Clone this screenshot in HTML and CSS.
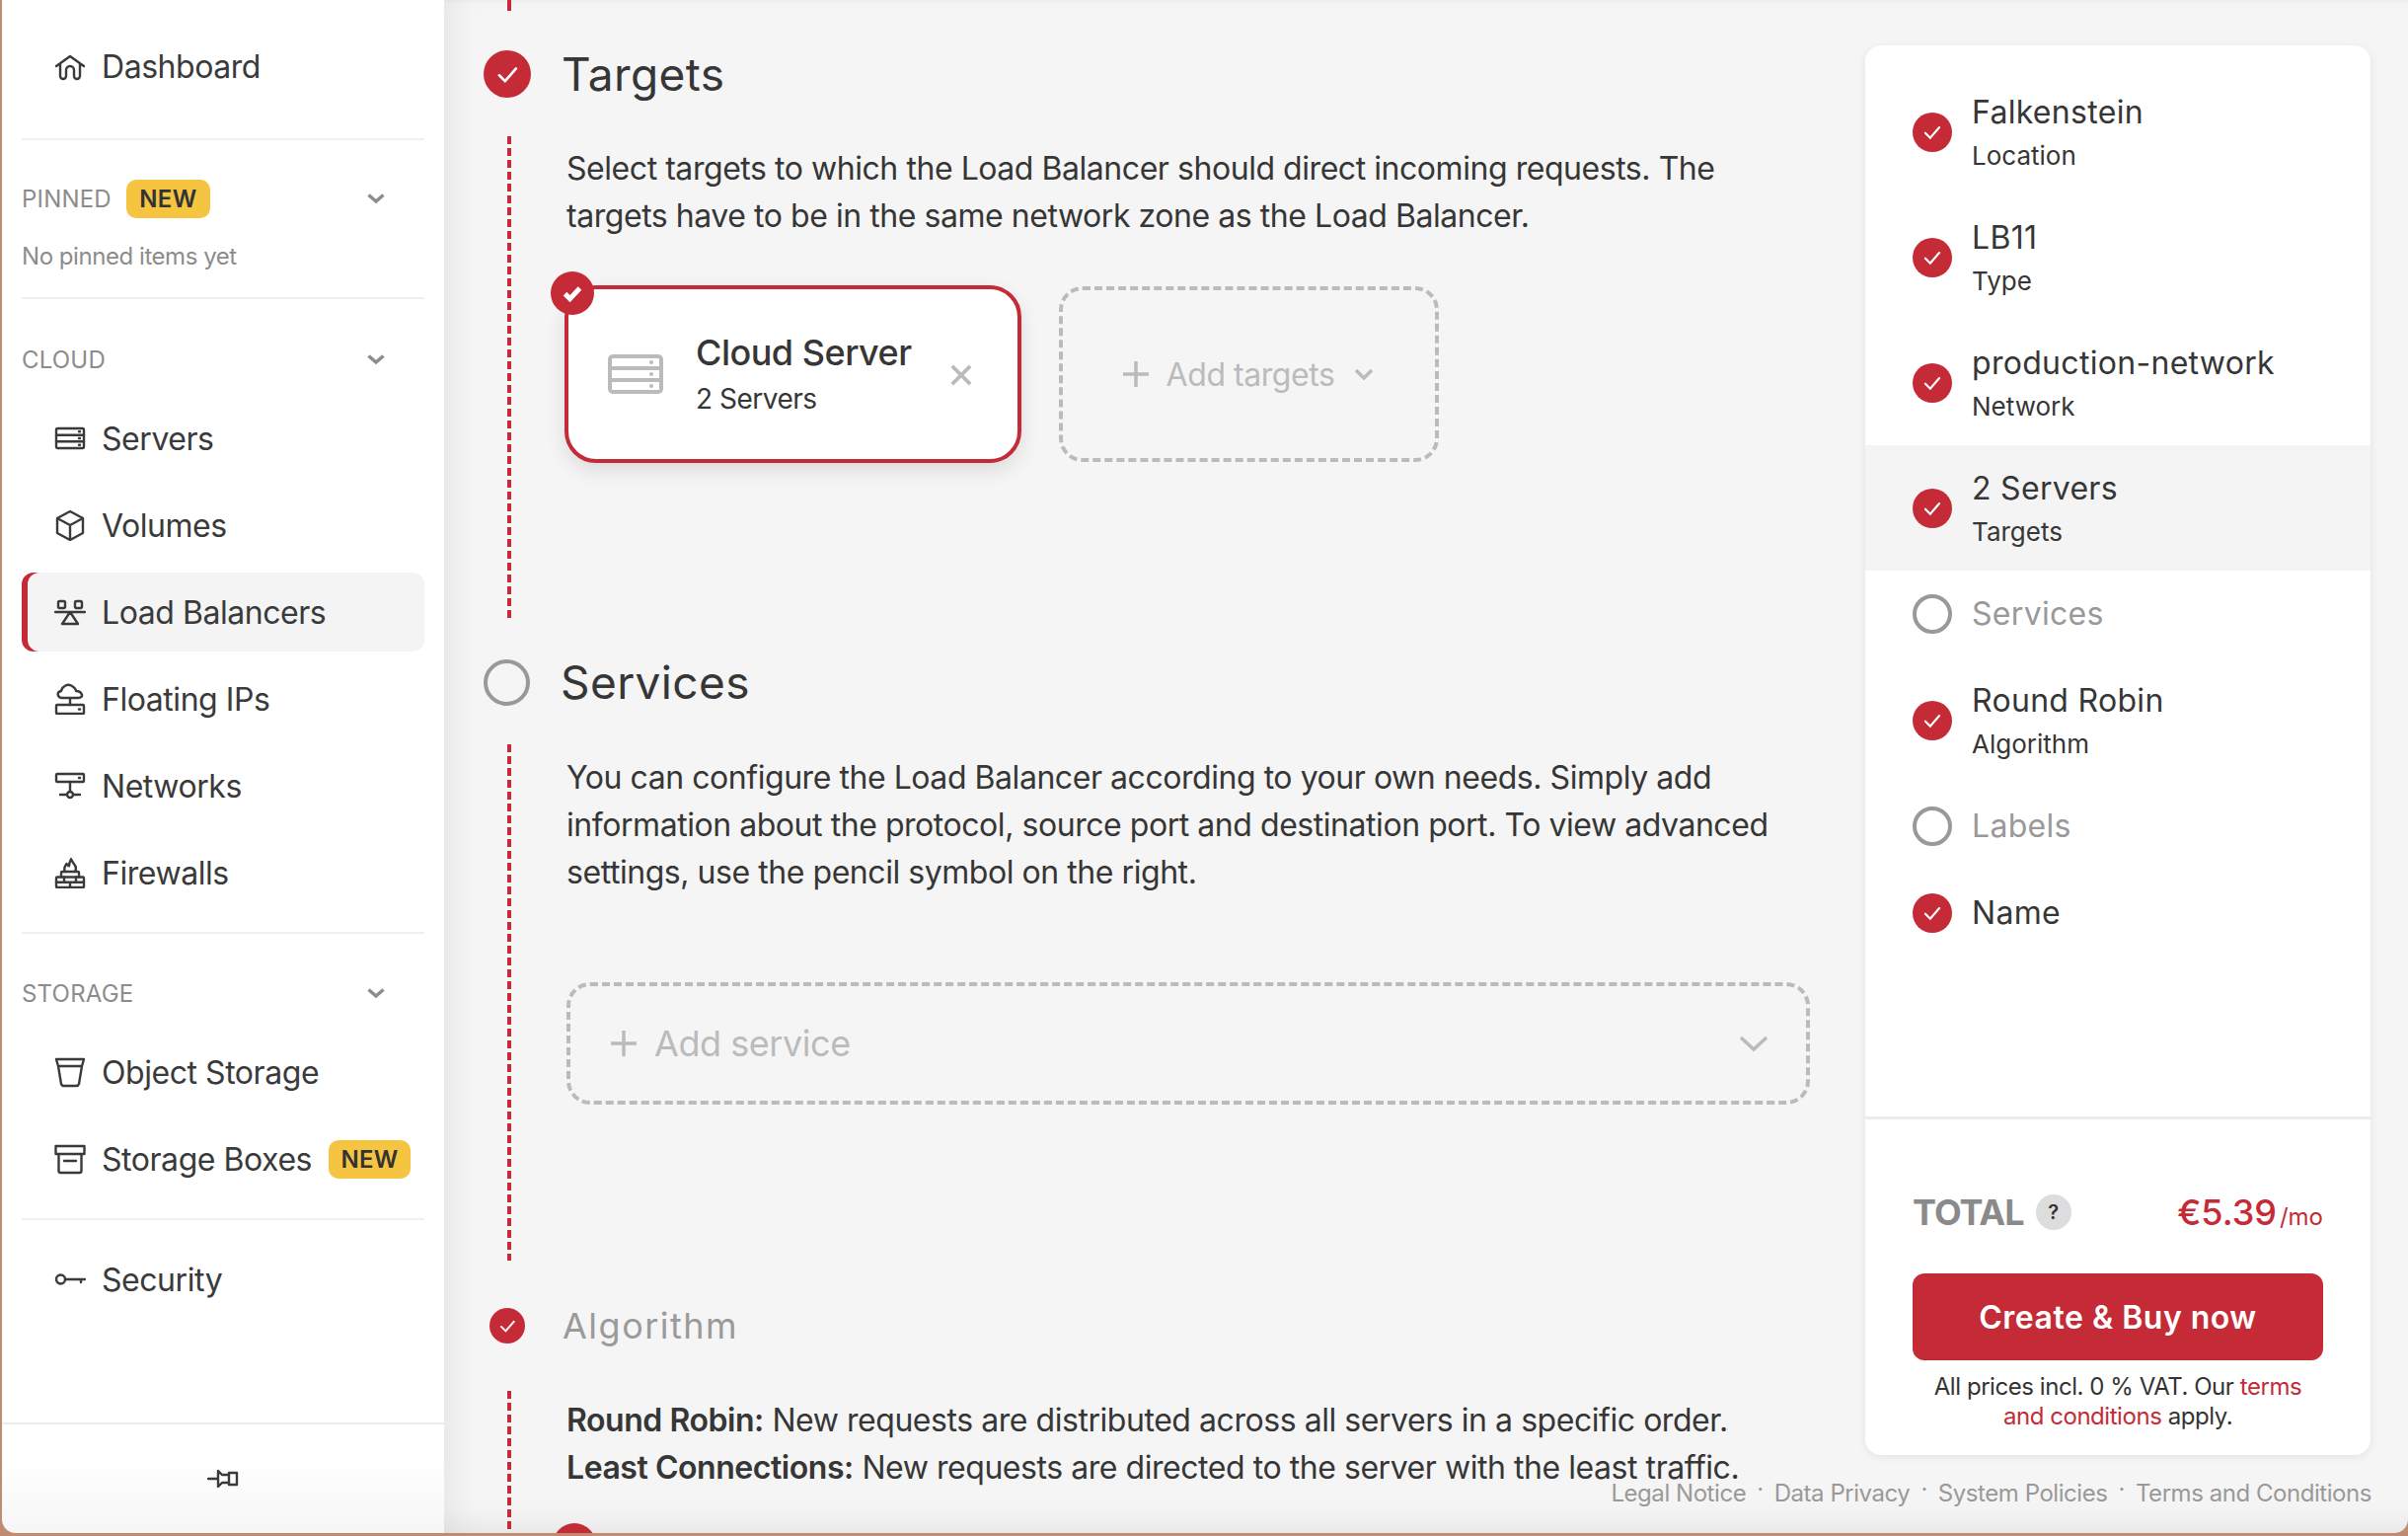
FILE: index.html
```html
<!DOCTYPE html>
<html lang="en">
<head>
<meta charset="utf-8">
<title>Create Load Balancer</title>
<link rel="stylesheet" href="styles.css">
</head>
<body>
<div class="window">
  <nav class="sidebar">
    <a class="row first"><svg class="ico" viewBox="0 0 32 32"><path d="M2 16 16 6l14 10M6 13v13a3 3 0 0 0 6 0v-6a4 4 0 0 1 8 0v6a3 3 0 0 0 6 0V13"/></svg>Dashboard</a>
    <hr class="rule">
    <div class="head"><span>PINNED</span><span class="badge">NEW</span><svg class="chev" viewBox="0 0 18 12"><path d="M1.5 2.5 9 9l7.5-6.5"/></svg></div>
    <p class="note">No pinned items yet</p>
    <hr class="rule tight">
    <div class="head cloud"><span>CLOUD</span><svg class="chev" viewBox="0 0 18 12"><path d="M1.5 2.5 9 9l7.5-6.5"/></svg></div>
    <div class="rows">
      <a class="row"><svg class="ico" viewBox="0 0 32 32"><rect x="2" y="6" width="28" height="20" rx="1.5"/><path d="M2 12.7h28M2 19.3h28M25 9.3h1M25 16h1M25 22.700h1"/></svg>Servers</a>
      <a class="row"><svg class="ico" viewBox="0 0 32 32"><path d="M16 2 29 9v15l-13 7-13-7V9zM3 9l13 7 13-7M16 16v15"/></svg>Volumes</a>
      <a class="row active"><svg class="ico" viewBox="0 0 32 32"><rect x="4" y="5" width="7" height="7" rx="1.5"/><rect x="21" y="5" width="7" height="7" rx="1.5"/><path d="M1 16h30M16 16 8 28h16z"/></svg>Load Balancers</a>
      <a class="row"><svg class="ico" viewBox="0 0 32 32"><path d="M8 15C3 15 2 9 7 8c1-5 7-8 11-5 3 2 4 4 4 5 6 0 9 7 2 7zM16 15v7"/><rect x="2" y="22" width="28" height="9" rx="1"/><path d="M25 26.500h1"/></svg>Floating IPs</a>
      <a class="row"><svg class="ico" viewBox="0 0 32 32"><rect x="2" y="4" width="28" height="8" rx="1"/><path d="M25 8h1M16 12v10M6 25h7M19 25h7"/><circle cx="16" cy="25" r="3"/></svg>Networks</a>
      <a class="row"><svg class="ico" viewBox="0 0 32 32"><path d="M11 15C9 12 11 9 12.500 7c.8 1.500 1.500 2 2.500 2.200 0-2.500 1-5 2-7 1 3 3 4.500 4 6.500 1.500 2.500 1 4.500 0 6.300"/><rect x="2" y="20.500" width="28" height="10.500" rx="1"/><path d="M7 20.500V16a1 1 0 0 1 1-1h16a1 1 0 0 1 1 1v4.500M2 25.700h28M10 20.500v5.200M22 20.500v5.200M16 25.700V31"/></svg>Firewalls</a>
    </div>
    <hr class="rule">
    <div class="head storage"><span>STORAGE</span><svg class="chev" viewBox="0 0 18 12"><path d="M1.5 2.5 9 9l7.500-6.500"/></svg></div>
    <div class="rows">
      <a class="row"><svg class="ico" viewBox="0 0 32 32"><path d="M2 3h28l-2 7H4zM4 10l3 18a3 3 0 0 0 3 2h12a3 3 0 0 0 3-2l3-18"/></svg>Object Storage</a>
      <a class="row"><svg class="ico" viewBox="0 0 32 32"><path d="M1.500 3h29v8h-29zM4.500 11v17a2 2 0 0 0 2 2h19a2 2 0 0 0 2-2V11M10 18h12"/></svg>Storage Boxes<span class="badge small">NEW</span></a>
    </div>
    <hr class="rule">
    <a class="row"><svg class="ico" viewBox="0 0 32 32"><circle cx="6.500" cy="16" r="4.500"/><path d="M11 16h20M27 16v3"/></svg>Security</a>
    <div class="side-foot"><svg class="ico" viewBox="0 0 32 32"><path d="M1 16h10M11 8l4 4h7v8h-7l-4 4zM22 10h8v12h-8z"/></svg></div>
  </nav>

  <main class="main">
    <div class="steps">
      <div class="lead"></div>
      <section>
        <header class="step-head">
          <span class="dot big"><svg viewBox="0 0 24 24"><path d="M7 12.500l3.500 3.500L17 8.500"/></svg></span>
          <h2>Targets</h2>
        </header>
        <div class="step-body targets">
          <p>Select targets to which the Load Balancer should direct incoming requests. The targets have to be in the same network zone as the Load Balancer.</p>
          <div class="cards">
            <div class="card">
              <span class="card-check"><svg viewBox="0 0 24 24"><path d="M6 12.500l4 4 8-8.500"/></svg></span>
              <svg class="card-ico" viewBox="0 0 56 40"><rect x="2" y="2" width="52" height="36" rx="3"/><path d="M2 14h52M2 26h52"/><circle class="fill" cx="44" cy="8" r="2"/><circle class="fill" cx="44" cy="20" r="2"/><circle class="fill" cx="44" cy="32" r="2"/></svg>
              <div class="card-text"><strong>Cloud Server</strong><span>2 Servers</span></div>
              <svg class="card-x" viewBox="0 0 24 24"><path d="M2 2l20 20M22 2 2 22"/></svg>
            </div>
            <div class="add-targets">
              <svg class="plus" viewBox="0 0 28 28"><path d="M14 1v26M1 14h26"/></svg>
              <span>Add targets</span>
              <svg class="add-chev" viewBox="0 0 20 12"><path d="M2 2l8 8 8-8"/></svg>
            </div>
          </div>
        </div>
      </section>
      <section>
        <header class="step-head">
          <span class="dot empty"></span>
          <h2>Services</h2>
        </header>
        <div class="step-body services">
          <p>You can configure the Load Balancer according to your own needs. Simply add information about the protocol, source port and destination port. To view advanced settings, use the pencil symbol on the right.</p>
          <div class="add-service">
            <svg class="plus" viewBox="0 0 28 28"><path d="M14 1v26M1 14h26"/></svg>
            <span>Add service</span>
            <svg class="service-chev" viewBox="0 0 30 18"><path d="M2 3l13 12L28 3"/></svg>
          </div>
        </div>
      </section>
      <section>
        <header class="step-head muted">
          <span class="dot mid"><svg viewBox="0 0 24 24"><path d="M7 12.500l3.500 3.500L17 8.500"/></svg></span>
          <h2>Algorithm</h2>
        </header>
        <div class="step-body algo">
          <p><b>Round Robin:</b> New requests are distributed across all servers in a specific order.<br><b>Least Connections:</b> New requests are directed to the server with the least traffic.</p>
          <span class="next-dot"></span>
        </div>
      </section>
    </div>

    <aside class="panel">
      <ul class="list">
        <li class="item"><span class="dot"><svg viewBox="0 0 24 24"><path d="M7 12.500l3.500 3.500L17 8.500"/></svg></span><div><div class="t">Falkenstein</div><div class="s">Location</div></div></li>
        <li class="item"><span class="dot"><svg viewBox="0 0 24 24"><path d="M7 12.500l3.500 3.500L17 8.500"/></svg></span><div><div class="t">LB11</div><div class="s">Type</div></div></li>
        <li class="item"><span class="dot"><svg viewBox="0 0 24 24"><path d="M7 12.500l3.500 3.500L17 8.500"/></svg></span><div><div class="t">production-network</div><div class="s">Network</div></div></li>
        <li class="item current"><span class="dot"><svg viewBox="0 0 24 24"><path d="M7 12.500l3.500 3.500L17 8.500"/></svg></span><div><div class="t">2 Servers</div><div class="s">Targets</div></div></li>
        <li class="item single off"><span class="dot empty"></span><div class="t">Services</div></li>
        <li class="item"><span class="dot"><svg viewBox="0 0 24 24"><path d="M7 12.500l3.500 3.500L17 8.500"/></svg></span><div><div class="t">Round Robin</div><div class="s">Algorithm</div></div></li>
        <li class="item single off"><span class="dot empty"></span><div class="t">Labels</div></li>
        <li class="item single"><span class="dot"><svg viewBox="0 0 24 24"><path d="M7 12.500l3.500 3.500L17 8.500"/></svg></span><div class="t">Name</div></li>
      </ul>
      <div class="summary">
        <div class="total"><span class="total-label">TOTAL</span><span class="help">?</span><span class="price">€5.39<small>/mo</small></span></div>
        <button class="buy">Create &amp; Buy now</button>
        <p class="fine">All prices incl. 0 % VAT. Our <a>terms and conditions</a> apply.</p>
      </div>
    </aside>

    <footer class="links"><a>Legal Notice</a><i>·</i><a>Data Privacy</a><i>·</i><a>System Policies</a><i>·</i><a>Terms and Conditions</a></footer>
  </main>
</div>
</body>
</html>
```
FILE: styles.css
```css
* { box-sizing: border-box; }
html, body { margin: 0; height: 1556px; overflow: hidden; }
body { background: #c08a73; font-family: Inter, "Liberation Sans", sans-serif; color: #363636; letter-spacing: -.45px; }
.window { display: flex; height: 1553px; margin-left: 2px; overflow: hidden; border-radius: 0 0 14px 14px; }

.sidebar { position: relative; z-index: 1; display: flex; flex-direction: column; width: 448px; flex: none; padding: 27px 20px 0; background: linear-gradient(#fff 1480px, #f6f6f6); }
.row { display: flex; align-items: center; gap: 16px; height: 80px; padding-left: 33px; font-size: 32px; color: #3a3a3a; border-radius: 12px; white-space: nowrap; }
.row.active { background: #f4f4f4; box-shadow: inset 6px 0 0 #c42b37; }
.rows { display: flex; flex-direction: column; gap: 8px; margin-top: 20px; }
.ico { width: 32px; height: 32px; flex: none; fill: none; stroke: #3a3a3a; stroke-width: 2.4; stroke-linecap: round; stroke-linejoin: round; }
.rule { width: 100%; height: 2px; margin: 33px 0 0; border: 0; background: #f0f0f0; flex: none; }
.rule.tight { margin-top: 23px; }
.rows + .rule { margin-top: 20px; }
.rule + .row { margin-top: 20px; }
.head { display: flex; align-items: center; gap: 15px; height: 40px; margin-top: 39px; font-size: 24px; color: #8c8c8c; letter-spacing: .2px; }
.head.cloud { margin-top: 41px; }
.head.storage { margin-top: 40px; }
.chev { width: 18px; height: 12px; margin-left: auto; margin-right: 40px; fill: none; stroke: #8c8c8c; stroke-width: 3.4; }
.badge { display: inline-flex; align-items: center; justify-content: center; width: 85px; height: 39px; border-radius: 10px; background: #f5c542; color: #333; font-size: 24px; font-weight: 600; letter-spacing: .3px; }
.badge.small { width: 83px; height: 39px; margin-left: 1px; }
.note { margin: 21px 0 0; font-size: 24px; line-height: 36px; color: #8c8c8c; }
.side-foot { display: flex; align-items: center; justify-content: center; height: 112px; margin: auto -20px 0; border-top: 2px solid #ececec; }

.main { position: relative; display: flex; flex: 1; min-width: 0; background: #f5f5f5; box-shadow: inset 24px 0 30px -14px rgba(0,0,0,.06), inset 0 -34px 30px -24px rgba(0,0,0,.06), inset 0 5px 4px -4px rgba(0,0,0,.04); }
.steps { flex: 1; min-width: 0; padding-left: 40px; padding-right: 55px; }
.lead, .step-body { margin-left: 24px; background: repeating-linear-gradient(#c42b37 0 8px, transparent 8px 12px) left top / 4px 100% no-repeat; }
.lead { height: 11px; background-image: linear-gradient(#c42b37, #c42b37); margin-bottom: 40px; }
.step-head { display: flex; align-items: center; height: 48px; }
.step-head h2 { margin: 0 0 0 31px; font-size: 46px; font-weight: 400; line-height: 48px; letter-spacing: .4px; color: #363636; }
.step-head.muted h2 { margin-left: 38px; font-size: 36px; letter-spacing: 1.5px; color: #9a9a9a; }
.step-body { margin-top: 39px; margin-bottom: 39px; padding-left: 60px; }
.step-body p { margin: 0; font-size: 32px; line-height: 48px; color: #363636; }
.step-body b { font-weight: 600; }
.targets { height: 490px; padding-top: 9px; }
.services { height: 523px; padding-top: 10px; margin-bottom: 42px; }
.algo { height: 200px; margin-top: 42px; padding-top: 6px; margin-bottom: 0; }

.dot { display: flex; align-items: center; justify-content: center; flex: none; width: 40px; height: 40px; border-radius: 50%; background: #c42b37; }
.dot svg { width: 85%; height: 85%; fill: none; stroke: #fff; stroke-width: 1.5; stroke-linecap: round; }
.dot.big { width: 48px; height: 48px; }
.dot.mid { width: 36px; height: 36px; margin-left: 6px; }
.dot.empty { background: transparent; border: 4px solid #999; width: 40px; height: 40px; }
.step-head .dot.empty { width: 47px; height: 47px; }

.cards { display: flex; gap: 38px; margin: 46px 0 0 -2px; }
.card { position: relative; display: flex; align-items: center; width: 463px; height: 180px; padding-left: 40px; background: #fff; border: 4px solid #c42b37; border-radius: 32px; box-shadow: 0 8px 20px rgba(0,0,0,.1); }
.card-check { position: absolute; left: -18px; top: -18px; display: flex; align-items: center; justify-content: center; width: 44px; height: 44px; border-radius: 50%; background: #c42b37; }
.card-check svg { width: 30px; height: 30px; fill: none; stroke: #fff; stroke-width: 4; }
.card-ico { width: 56px; height: 40px; flex: none; fill: none; stroke: #bbb; stroke-width: 4; }
.card-ico .fill { fill: #bbb; stroke: none; }
.card-text { display: flex; flex-direction: column; margin: -2px 0 0 33px; }
.card-text strong { font-size: 36px; font-weight: 500; line-height: 44px; letter-spacing: -.5px; color: #363636; }
.card-text span { margin-top: 7px; font-size: 28px; line-height: 36px; letter-spacing: -.5px; color: #363636; }
.card-x { position: absolute; right: 46px; top: 76px; width: 22px; height: 22px; fill: none; stroke: #bbb; stroke-width: 4; }
.add-targets { display: flex; align-items: center; justify-content: center; width: 385px; height: 178px; margin-top: 1px; padding-right: 2px; border: 4px dashed #bbb; border-radius: 24px; color: #bbb; font-size: 32px; }
.plus { width: 28px; height: 28px; flex: none; fill: none; stroke: #bbb; stroke-width: 3.5; }
.add-targets .plus { margin-right: 17px; }
.add-chev { width: 20px; height: 12px; margin-left: 20px; fill: none; stroke: #bbb; stroke-width: 3.5; }
.add-service { display: flex; align-items: center; width: 1260px; height: 124px; margin-top: 87px; padding: 0 38px 0 40px; border: 4px dashed #bbb; border-radius: 24px; color: #bbb; font-size: 36px; }
.add-service .plus { margin-right: 17px; }
.service-chev { width: 30px; height: 18px; margin-left: auto; fill: none; stroke: #bbb; stroke-width: 3.5; }
.next-dot { display: block; width: 44px; height: 44px; margin: 32px 0 0 -14px; border-radius: 50%; background: #c42b37; }

.panel { display: flex; flex-direction: column; flex: none; width: 512px; height: 1428px; margin: 46px 38px 0 0; background: #fff; border-radius: 16px; box-shadow: 0 2px 8px rgba(0,0,0,.08); overflow: hidden; }
.list { flex: 1; margin: 0; padding: 24px 0 0; list-style: none; }
.item { display: flex; align-items: center; gap: 20px; height: 127px; padding-left: 48px; }
.item.single { height: 88px; }
.item.current { background: #f4f4f4; }
.t { font-size: 32px; line-height: 44px; letter-spacing: .3px; color: #363636; }
.s { margin-top: 4px; font-size: 26px; line-height: 36px; letter-spacing: 0; color: #363636; }
.off .t { color: #999; }
.summary { flex: none; height: 343px; padding: 74px 48px 0; border-top: 3px solid #ececec; }
.total { display: flex; align-items: center; height: 40px; }
.total-label { font-size: 36px; font-weight: 700; color: #8a8a8a; letter-spacing: -1px; }
.help { display: flex; align-items: center; justify-content: center; width: 36px; height: 36px; margin-left: 12px; border-radius: 50%; background: #ddd; font-size: 20px; font-weight: 600; color: #333; }
.price { margin-left: auto; font-size: 36px; font-weight: 500; letter-spacing: 0; color: #c42b37; white-space: nowrap; }
.price small { margin-left: 3px; font-size: 24px; font-weight: 400; }
.buy { display: block; width: 100%; height: 88px; margin-top: 42px; border: 0; border-radius: 12px; background: #c42b37; color: #fff; font: 600 32px Inter, "Liberation Sans", sans-serif; letter-spacing: .5px; }
.fine { margin: 12px 0 0; font-size: 24px; line-height: 30px; text-align: center; color: #333; }
.fine a { color: #c42b37; }
.links { position: absolute; right: 37px; bottom: 22px; display: flex; gap: 11px; font-size: 24px; line-height: 36px; color: #999; }
.links i { font-style: normal; transform: translateY(-4px); }
```
